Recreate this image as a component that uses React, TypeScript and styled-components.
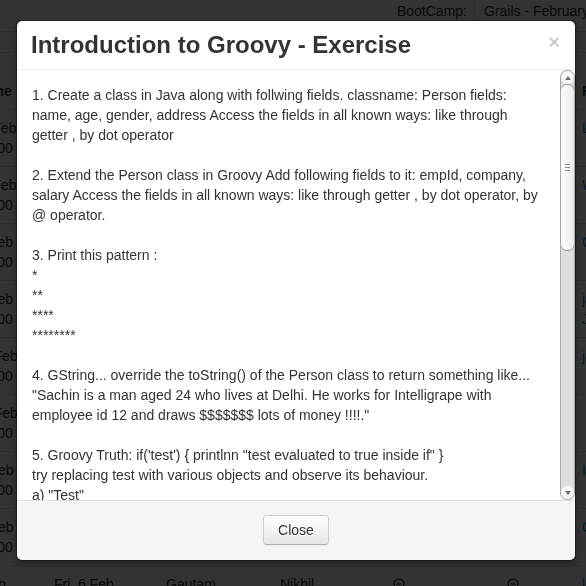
import React from 'react';
import styled, { createGlobalStyle } from 'styled-components';
import { CircleMinus } from 'lucide-react';

type Session = {
	when: [string, string];
	day: string;
	trainer: string;
	trainee: string;
	link: [string, string?];
};

const sessions: Session[] = [
	{ when: ['Mon, 02 Feb', '10:00-13:00'], day: 'Mon, 2 Feb', trainer: 'Gautam', trainee: 'Nikhil', link: ['Link'] },
	{ when: ['Mon, 02 Feb', '14:00-17:00'], day: 'Mon, 2 Feb', trainer: 'Vivek', trainee: 'Nikhil', link: ['Workspace'] },
	{ when: ['Tue, 03 Feb', '10:00-13:00'], day: 'Tue, 3 Feb', trainer: 'Gautam', trainee: 'Nikhil', link: ['Closures'] },
	{ when: ['Tue, 03 Feb', '14:00-17:00'], day: 'Tue, 3 Feb', trainer: 'Vivek', trainee: 'Nikhil', link: ['java', 'Java'] },
	{ when: ['Wed, 04 Feb', '10:00-13:00'], day: 'Wed, 4 Feb', trainer: 'Gautam', trainee: 'Nikhil', link: ['java'] },
	{ when: ['Wed, 04 Feb', '14:00-17:00'], day: 'Wed, 4 Feb', trainer: 'Vivek', trainee: 'Nikhil', link: [''] },
	{ when: ['Thu, 05 Feb', '10:00-13:00'], day: 'Thu, 5 Feb', trainer: 'Gautam', trainee: 'Nikhil', link: ['Intro'] },
	{ when: ['Thu, 05 Feb', '14:00-17:00'], day: 'Thu, 5 Feb', trainer: 'Vivek', trainee: 'Nikhil', link: ['Collections'] },
	{ when: ['Fri, 06 Feb', '10:00-13:00'], day: 'Fri, 6 Feb', trainer: 'Gautam', trainee: 'Nikhil', link: ['link'] },
];

const VISIBLE_HEIGHT = 430;
const CONTENT_HEIGHT = 1030;

export default function App() {
	// the thumb takes the share of the track that the visible part takes of the text
	const trackHeight = VISIBLE_HEIGHT - 30;
	const thumbHeight = Math.round((trackHeight * VISIBLE_HEIGHT) / CONTENT_HEIGHT);

	return (
		<>
			<GlobalStyle />
			<Sheet>
				<InfoBar>
					<InfoLabel>BootCamp:</InfoLabel>
					<InfoValue>Grails - February 2015</InfoValue>
				</InfoBar>
				<Schedule>
					<colgroup>
						<col style={{ width: 116 }} />
						<col style={{ width: 112 }} />
						<col style={{ width: 114 }} />
						<col style={{ width: 113 }} />
						<col style={{ width: 114 }} />
						<col style={{ width: 75 }} />
						<col />
					</colgroup>
					<thead>
						<tr>
							<th>Class Time</th>
							<th>Day</th>
							<th>Trainer</th>
							<th>Trainee</th>
							<th>Trainer Feedback</th>
							<th>Trainee Rating</th>
							<th>Feedback</th>
						</tr>
					</thead>
					<tbody>
						{sessions.map((s, i) => (
							<tr key={i}>
								<td>
									{s.when[0]}
									<br />
									{s.when[1]}
								</td>
								<td>{s.day}</td>
								<td>{s.trainer}</td>
								<td>{s.trainee}</td>
								<td>
									<CircleMinus size={12} strokeWidth={2.5} />
								</td>
								<td>
									<CircleMinus size={12} strokeWidth={2.5} />
								</td>
								<td>
									<CellLink>{s.link[0]}</CellLink>
									{s.link[1] && (
										<>
											<br />
											<CellLink>{s.link[1]}</CellLink>
										</>
									)}
								</td>
							</tr>
						))}
					</tbody>
				</Schedule>
			</Sheet>

			<Backdrop />

			<Modal>
				<ModalHeader>
					<ModalTitle>Introduction to Groovy - Exercise</ModalTitle>
					<CloseX type="button">×</CloseX>
				</ModalHeader>
				<ModalBody>
					<BodyText>
						<Exercise>
							1. Create a class in Java along with follwing fields. classname: Person fields: name,
							age, gender, address Access the fields in all known ways: like through getter , by dot
							operator
						</Exercise>
						<Exercise>
							2. Extend the Person class in Groovy Add following fields to it: empId, company, salary
							Access the fields in all known ways: like through getter , by dot operator, by @
							operator.
						</Exercise>
						<Exercise>
							3. Print this pattern :
							<br />*
							<br />**
							<br />****
							<br />********
							<br />
						</Exercise>
						<Exercise>
							4. GString... override the toString() of the Person class to return something like...
							"Sachin is a man aged 24 who lives at Delhi. He works for Intelligrape with employee id
							12 and draws $$$$$$$ lots of money !!!!."
						</Exercise>
						<Exercise>
							5. Groovy Truth: if('test') {'{'} printlnn "test evaluated to true inside if" {'}'}
							<br />
							try replacing test with various objects and observe its behaviour.
							<br />a) "Test"
							<br />b) 'null'
							<br />c) null
							<br />d) 100
							<br />e) 0
							<br />f) 0.0
							<br />g) []
							<br />h) [1,2,3]
							<br />i) [:]
						</Exercise>
						<Exercise>
							6. Create a String 'This is a Groovy String' and print it in reverse by words. Also
							print the number of occurrences of each character in the same string.
						</Exercise>
						<Exercise>
							7. Write a closure that takes a number and returns its square. Pass it to a method that
							applies it to every element of a list and prints the result.
						</Exercise>
						<Exercise>
							8. Create a list of Person objects and sort it by age, then by name. Print the names of
							all the people whose salary is more than 5000.
						</Exercise>
					</BodyText>
					<ScrollRail>
						<ScrollArrow>
							<ArrowGlyph $dir="up" />
						</ScrollArrow>
						<ScrollTrack>
							<ScrollThumb style={{ height: thumbHeight }}>
								<Grip />
								<Grip />
								<Grip />
							</ScrollThumb>
						</ScrollTrack>
						<ScrollArrow>
							<ArrowGlyph $dir="down" />
						</ScrollArrow>
					</ScrollRail>
				</ModalBody>
				<ModalFooter>
					<CloseButton type="button">Close</CloseButton>
				</ModalFooter>
			</Modal>
		</>
	);
}

const GlobalStyle = createGlobalStyle`
	html,
	body {
		margin: 0;
		padding: 0;
		height: 100%;
		overflow: hidden;
		background: #fff;
	}

	body {
		font-family: 'Liberation Sans', Arial, Helvetica, sans-serif;
		font-size: 14px;
		line-height: 20px;
		color: #333;
	}
`;

const Sheet = styled.div`
	width: 720px;
	margin-left: -70px;
`;

const InfoBar = styled.div`
	display: flex;
	border-bottom: 1px solid #ddd;
`;

const InfoLabel = styled.div`
	flex: 1;
	text-align: right;
	padding: 1px 7px 10px 0;
	border-right: 1px solid #ddd;
`;

const InfoValue = styled.div`
	width: 166px;
	padding: 1px 0 10px 9px;
	white-space: nowrap;
`;

const Schedule = styled.table`
	width: 100%;
	margin-top: 20px;
	border-collapse: collapse;
	table-layout: fixed;

	th,
	td {
		padding: 8px;
		text-align: left;
		border-top: 1px solid #ddd;
		white-space: nowrap;
		overflow: hidden;
	}

	th {
		vertical-align: bottom;
		font-weight: bold;
		white-space: normal;
	}

	td {
		vertical-align: top;
	}

	svg {
		vertical-align: -1px;
		color: #333;
	}
`;

const CellLink = styled.span`
	color: #08c;
`;

const Backdrop = styled.div`
	position: fixed;
	inset: 0;
	background: #000;
	opacity: 0.8;
`;

const Modal = styled.div`
	position: fixed;
	top: 20px;
	left: 16px;
	width: 560px;
	box-sizing: border-box;
	background: #fff;
	background-clip: padding-box;
	border: 1px solid rgba(0, 0, 0, 0.3);
	border-radius: 6px;
	box-shadow: 0 3px 7px rgba(0, 0, 0, 0.3);
`;

const ModalHeader = styled.div`
	display: flex;
	align-items: flex-start;
	justify-content: space-between;
	padding: 9px 15px 9px 14px;
	border-bottom: 1px solid #eee;
`;

const ModalTitle = styled.h3`
	margin: 0;
	font-size: 24px;
	line-height: 30px;
	font-weight: bold;
	color: #333;
`;

const CloseX = styled.button`
	margin-top: 2px;
	padding: 0;
	border: 0;
	background: transparent;
	font-family: inherit;
	font-size: 20px;
	font-weight: bold;
	line-height: 20px;
	color: #000;
	opacity: 0.2;
	text-shadow: 0 1px 0 #fff;
	cursor: pointer;
`;

const ModalBody = styled.div`
	display: flex;
	height: 430px;
`;

const BodyText = styled.div`
	flex: 1;
	min-width: 0;
	padding: 15px;
	overflow: hidden;
`;

const ScrollRail = styled.div`
	display: flex;
	flex-direction: column;
	width: 15px;
	box-sizing: border-box;
	border: 1px solid #a9a9a9;
	border-radius: 7px;
	background: #dedede;
	overflow: hidden;
`;

const ScrollArrow = styled.div`
	flex: none;
	display: flex;
	align-items: center;
	justify-content: center;
	height: 13px;
	background: #f7f7f7;
	border-radius: 7px;
`;

const ArrowGlyph = styled.span<{ $dir: 'up' | 'down' }>`
	width: 0;
	height: 0;
	border-left: 3px solid transparent;
	border-right: 3px solid transparent;
	${({ $dir }) =>
		$dir === 'up' ? 'border-bottom: 4px solid #6b6b6b;' : 'border-top: 4px solid #6b6b6b;'}
`;

const ScrollTrack = styled.div`
	flex: 1;
	display: flex;
	flex-direction: column;
`;

const ScrollThumb = styled.div`
	display: flex;
	flex-direction: column;
	align-items: center;
	justify-content: center;
	gap: 2px;
	margin: 0 -1px;
	box-sizing: border-box;
	border: 1px solid #9c9c9c;
	border-radius: 7px;
	background: linear-gradient(to right, #fdfdfd, #ebebeb);
`;

const Grip = styled.span`
	width: 5px;
	height: 1px;
	background: #8c8c8c;
`;

const Exercise = styled.p`
	margin: 0 0 20px;
`;

const ModalFooter = styled.div`
	padding: 14px 15px 15px;
	text-align: center;
	background: #f5f5f5;
	border-top: 1px solid #ddd;
	border-radius: 0 0 6px 6px;
	box-shadow: inset 0 1px 0 #fff;
`;

const CloseButton = styled.button`
	display: inline-block;
	padding: 4px 14px;
	font-family: inherit;
	font-size: 14px;
	line-height: 20px;
	color: #333;
	text-shadow: 0 1px 1px rgba(255, 255, 255, 0.75);
	background-color: #f5f5f5;
	background-image: linear-gradient(to bottom, #fff, #e6e6e6);
	border: 1px solid #ccc;
	border-bottom-color: #b3b3b3;
	border-radius: 4px;
	box-shadow: inset 0 1px 0 rgba(255, 255, 255, 0.2), 0 1px 2px rgba(0, 0, 0, 0.05);
	cursor: pointer;
`;
